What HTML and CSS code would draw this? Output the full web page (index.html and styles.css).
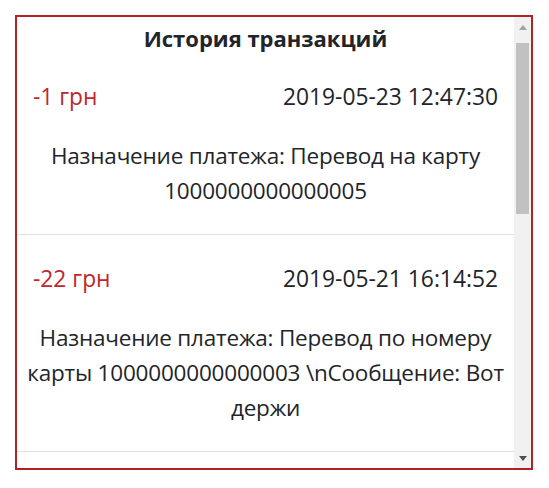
FILE: index.html
```html
<!DOCTYPE html>
<html lang="ru">
<head>
<meta charset="utf-8">
<title>История транзакций</title>
<link rel="stylesheet" href="styles.css">
</head>
<body>
<div class="page">
  <div class="panel">
    <div class="list">
      <h5 class="title">История транзакций</h5>
      <div class="item">
        <div class="row">
          <span class="amount">-1 грн</span>
          <span class="date">2019-05-23 12:47:30</span>
        </div>
        <p class="desc">Назначение платежа: Перевод на карту 1000000000000005</p>
      </div>
      <div class="item">
        <div class="row">
          <span class="amount">-22 грн</span>
          <span class="date">2019-05-21 16:14:52</span>
        </div>
        <p class="desc">Назначение платежа: Перевод по номеру карты 1000000000000003 \nСообщение: Вот держи</p>
      </div>
    </div>
    <div class="scrollbar">
      <div class="arrow up"></div>
      <div class="track"><div class="thumb"></div></div>
      <div class="arrow down"></div>
    </div>
  </div>
</div>
</body>
</html>
```
FILE: styles.css
```css
html, body {
  margin: 0;
  padding: 0;
  background: #fff;
}
.page {
  padding: 15px 16px 0 15px;
  font-family: "Open Sans", "Noto Sans", sans-serif;
  color: #212529;
}
.panel {
  display: flex;
  height: 451px;
  border: 2px solid #b22222;
  overflow: hidden;
}
.list {
  flex: 1;
  min-width: 0;
  overflow: hidden;
}
.title {
  margin: 0;
  padding-top: 6px;
  text-align: center;
  font-size: 22px;
  font-weight: 700;
  line-height: 30px;
}
.item {
  padding: 26px 16px 26px 16px;
  border-bottom: 1px solid #dee2e6;
}
.title + .item {
  padding-top: 26px;
}
.row {
  display: flex;
  justify-content: space-between;
  font-size: 22.8px;
  line-height: 35px;
}
.amount {
  color: #c0272d;
}
.desc {
  margin: 24px -10px 0 -10px;
  text-align: center;
  font-size: 22.5px;
  letter-spacing: -0.2px;
  line-height: 35px;
}
.scrollbar {
  width: 17px;
  flex: none;
  background: #f1f1f1;
  display: flex;
  flex-direction: column;
}
.arrow {
  height: 20px;
  flex: none;
  display: flex;
  align-items: center;
  justify-content: center;
}
.arrow::before {
  content: "";
  width: 0;
  height: 0;
  border-left: 4.5px solid transparent;
  border-right: 4.5px solid transparent;
}
.up::before {
  border-bottom: 5px solid #a3a3a3;
}
.down::before {
  border-top: 5px solid #505050;
}
.track {
  flex: 1;
  padding: 6px 2px 0 2px;
}
.thumb {
  height: 171px;
  background: #c1c1c1;
}
```
